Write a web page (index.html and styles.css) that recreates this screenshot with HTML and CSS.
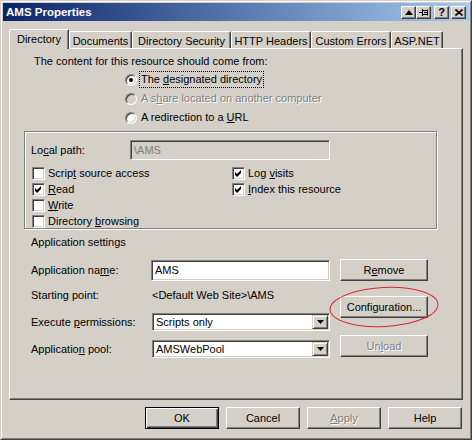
FILE: index.html
```html
<!DOCTYPE html>
<html>
<head>
<meta charset="utf-8">
<title>AMS Properties</title>
<link rel="stylesheet" href="styles.css">
</head>
<body>
<div class="window">
  <div class="frame">
    <div class="titlebar">
      <span class="title">AMS Properties</span>
      <div class="caption-btns">
        <span class="cbtn"><svg width="8" height="5" viewBox="0 0 8 5"><polygon points="0,5 8,5 4,0" fill="#000"/></svg></span>
        <span class="cbtn"><svg width="10" height="9" viewBox="0 0 10 9" fill="none" stroke="#000" stroke-width="1"><path d="M0 4.5H3.5M3.5 1V8M4 2.5H8.5V6.5H4M8.5 1.5V7.5M5 4.5H8"/></svg></span>
        <span class="cbtn gap3 qmark">?</span>
        <span class="cbtn gap2"><svg width="8" height="7" viewBox="0 0 8 7" stroke="#000" stroke-width="1.6"><path d="M0.5 0.5L7.5 6.5M7.5 0.5L0.5 6.5"/></svg></span>
      </div>
    </div>
    <div class="body">
      <div class="tabs">
        <div class="tab selected w-dir">Directory</div>
        <div class="tab w-doc">Documents</div>
        <div class="tab w-sec">Directory Security</div>
        <div class="tab w-http">HTTP Headers</div>
        <div class="tab w-err">Custom Errors</div>
        <div class="tab w-asp">ASP.NET</div>
      </div>
      <div class="panel">
        <div class="intro">The content for this resource should come from:</div>
        <div class="radios">
          <div class="rrow"><span class="radio"><span class="dot"></span></span><span class="rlabel focus">The <u>d</u>esignated directory</span></div>
          <div class="rrow disabled"><span class="radio off"></span><span class="rlabel">A s<u>h</u>are located on another computer</span></div>
          <div class="rrow"><span class="radio"></span><span class="rlabel">A redirection to a <u>U</u>RL</span></div>
        </div>
        <div class="group">
          <div class="pathrow">
            <span class="plabel">Lo<u>c</u>al path:</span>
            <span class="field off path">\AMS</span>
          </div>
          <div class="checks">
            <div class="crow"><span class="cb"></span><span>Scrip<u>t</u> source access</span></div>
            <div class="crow"><span class="cb"><svg width="7" height="7" viewBox="0 0 7 7"><path d="M0 2L2 4L6 0V3L2 7L0 5Z" fill="#000"/></svg></span><span>Log <u>v</u>isits</span></div>
            <div class="crow"><span class="cb"><svg width="7" height="7" viewBox="0 0 7 7"><path d="M0 2L2 4L6 0V3L2 7L0 5Z" fill="#000"/></svg></span><span><u>R</u>ead</span></div>
            <div class="crow"><span class="cb"><svg width="7" height="7" viewBox="0 0 7 7"><path d="M0 2L2 4L6 0V3L2 7L0 5Z" fill="#000"/></svg></span><span><u>I</u>ndex this resource</span></div>
            <div class="crow"><span class="cb"></span><span><u>W</u>rite</span></div>
            <div class="crow"></div>
            <div class="crow"><span class="cb"></span><span>Directory <u>b</u>rowsing</span></div>
          </div>
        </div>
        <div class="appset">Application settings</div>
        <div class="app">
          <div class="appgrid">
            <span class="alabel mid">Application na<u>m</u>e:</span>
            <span class="field name">AMS</span>
            <span class="alabel top">Starting point:</span>
            <span class="aval top">&lt;Default Web Site&gt;\AMS</span>
            <span class="alabel sel">Execute <u>p</u>ermissions:</span>
            <div class="select"><span class="sval">Scripts only</span><span class="sbtn"><svg width="7" height="4" viewBox="0 0 7 4"><polygon points="0,0 7,0 3.5,4" fill="#000"/></svg></span></div>
            <span class="alabel sel">Applicatio<u>n</u> pool:</span>
            <div class="select"><span class="sval">AMSWebPool</span><span class="sbtn"><svg width="7" height="4" viewBox="0 0 7 4"><polygon points="0,0 7,0 3.5,4" fill="#000"/></svg></span></div>
          </div>
          <div class="appbtns">
            <div class="btn">R<u>e</u>move</div>
            <div class="btn cfg">Confi<u>g</u>uration...</div>
            <div class="btn off unload">Un<u>l</u>oad</div>
          </div>
        </div>
      </div>
      <div class="footer">
        <div class="btn dlg default">OK</div>
        <div class="btn dlg">Cancel</div>
        <div class="btn dlg off"><u>A</u>pply</div>
        <div class="btn dlg">Help</div>
      </div>
    </div>
  </div>
  <svg class="annot" width="120" height="50" viewBox="0 0 120 50"><ellipse cx="59" cy="24" rx="54" ry="19.5" transform="rotate(-3 59 24)" fill="none" stroke="#d22a2a" stroke-width="1"/></svg>
</div>
</body>
</html>
```
FILE: styles.css
```css
* { box-sizing: border-box; }

body {
  margin: 0;
  background: #D4D0C8;
  font-family: "Liberation Sans", Arial, sans-serif;
  font-size: 11px;
  color: #000;
}

u { text-decoration: underline; text-underline-offset: 1px; }

.window {
  position: relative;
  width: 472px;
  height: 440px;
  background: #D4D0C8;
  border: 1px solid;
  border-color: #D4D0C8 #404040 #404040 #D4D0C8;
}

.frame {
  height: 100%;
  border: 1px solid;
  border-color: #fff #808080 #808080 #fff;
  padding: 1px;
  display: flex;
  flex-direction: column;
}

.titlebar {
  flex: none;
  height: 18px;
  background: linear-gradient(to right, #0A246A, #A6CAF0);
  display: flex;
  align-items: center;
  justify-content: space-between;
  padding-left: 3px;
}

.title {
  color: #fff;
  font-weight: bold;
  font-size: 11.5px;
}

.caption-btns {
  display: flex;
  margin-right: 3px;
}

.cbtn {
  width: 15px;
  height: 13px;
  background: #D4D0C8;
  border: 1px solid;
  border-color: #fff #404040 #404040 #fff;
  box-shadow: inset -1px -1px #808080;
  display: flex;
  align-items: center;
  justify-content: center;
}

.cbtn.gap3 { margin-left: 3px; }
.cbtn.gap2 { margin-left: 2px; }

.qmark {
  font-weight: bold;
  font-size: 11px;
  line-height: 11px;
}

.body {
  flex: 1;
  padding: 8px 6px 0 6px;
  display: flex;
  flex-direction: column;
}

.tabs {
  display: flex;
  align-items: flex-end;
  height: 19px;
  position: relative;
  z-index: 1;
}

.tab {
  height: 17px;
  border: 1px solid;
  border-bottom: none;
  border-color: #fff #404040 transparent #fff;
  box-shadow: inset -1px 0 #808080;
  border-radius: 2px 2px 0 0;
  padding-top: 3px;
  line-height: 13px;
  text-align: center;
  white-space: nowrap;
  background: #D4D0C8;
}

.tab.selected {
  height: 20px;
  margin-bottom: -1px;
}

.w-dir { width: 60px; }
.w-doc { width: 63px; }
.w-sec { width: 99px; }
.w-http { width: 80px; }
.w-err { width: 80px; }
.w-asp { width: 52px; }

.panel {
  flex: none;
  height: 352px;
  border: 1px solid;
  border-color: #fff #404040 #404040 #fff;
  box-shadow: inset -1px -1px #808080;
}

.intro {
  margin: 6px 0 0 24px;
  line-height: 13px;
}

.radios {
  margin: 2px 0 0 115px;
}

.rrow {
  height: 19px;
  display: flex;
  align-items: center;
}

.radio {
  flex: none;
  width: 12px;
  height: 12px;
  border-radius: 50%;
  background: #fff;
  border: 1px solid;
  border-color: #808080 #fff #fff #808080;
  box-shadow: inset 1px 1px #404040, inset -1px -1px #D4D0C8;
  margin-right: 2px;
  display: flex;
  align-items: center;
  justify-content: center;
}

.radio.off { background: #D4D0C8; }

.dot {
  width: 4px;
  height: 4px;
  border-radius: 50%;
  background: #000;
}

.rlabel {
  border: 1px dotted transparent;
  padding: 1px 1px 1px 1px;
  line-height: 13px;
}

.rlabel.focus { border-color: #000; }

.disabled .rlabel,
.off {
  color: #808080;
  text-shadow: 1px 1px 0 #fff;
}

.group {
  margin: 4px 0 0 14px;
  width: 413px;
  height: 98px;
  border: 1px solid #808080;
  box-shadow: inset 1px 1px #fff, 1px 1px #fff;
  overflow: hidden;
}

.pathrow {
  display: flex;
  align-items: center;
  height: 20px;
  margin-top: 8px;
  padding-left: 6px;
}

.plabel { width: 99px; }

.field {
  display: block;
  height: 20px;
  border: 1px solid;
  border-color: #808080 #fff #fff #808080;
  box-shadow: inset 1px 1px #404040, inset -1px -1px #D4D0C8;
  background: #fff;
  padding: 0 3px;
  line-height: 18px;
}

.field.off { background: #D4D0C8; text-shadow: none; }
.field.path { width: 200px; }

.checks {
  display: grid;
  grid-template-columns: 200px 1fr;
  grid-auto-rows: 16px;
  margin-top: 7px;
  padding-left: 7px;
}

.crow {
  display: flex;
  align-items: flex-start;
  line-height: 12px;
}

.cb {
  flex: none;
  width: 13px;
  height: 13px;
  margin-right: 3px;
  background: #fff;
  border: 1px solid;
  border-color: #808080 #fff #fff #808080;
  box-shadow: inset 1px 1px #404040, inset -1px -1px #D4D0C8;
  display: flex;
  align-items: center;
  justify-content: center;
}

.appset {
  margin: 7px 0 0 21px;
  line-height: 13px;
}

.app {
  display: flex;
  margin: 10px 0 0 21px;
}

.appgrid {
  display: grid;
  grid-template-columns: 120px 179px;
  grid-template-rows: 22px 32px 27px 19px;
}

.alabel.mid { align-self: center; line-height: 13px; padding-top: 1px; }
.alabel.top, .aval.top { padding-top: 8px; line-height: 13px; }
.aval { padding-left: 1px; }
.alabel.sel { line-height: 18px; }

.field.name {
  align-self: end;
  height: 21px;
  line-height: 19px;
}

.select {
  width: 178px;
  height: 18px;
  margin-left: 1px;
  border: 1px solid;
  border-color: #808080 #fff #fff #808080;
  box-shadow: inset 1px 1px #404040, inset -1px -1px #D4D0C8;
  background: #fff;
  display: flex;
  padding: 1px;
}

.sval {
  flex: 1;
  padding-left: 2px;
  line-height: 14px;
}

.sbtn {
  width: 16px;
  background: #D4D0C8;
  border: 1px solid;
  border-color: #D4D0C8 #404040 #404040 #D4D0C8;
  box-shadow: inset 1px 1px #fff, inset -1px -1px #808080;
  display: flex;
  align-items: center;
  justify-content: center;
}

.appbtns {
  margin-left: 10px;
  display: flex;
  flex-direction: column;
}

.btn {
  width: 88px;
  height: 22px;
  background: #D4D0C8;
  border: 1px solid;
  border-color: #fff #404040 #404040 #fff;
  box-shadow: inset -1px -1px #808080;
  display: flex;
  align-items: center;
  justify-content: center;
  line-height: 13px;
  white-space: nowrap;
}

.btn.cfg { margin-top: 15px; }
.btn.unload { margin-top: 17px; }

.footer {
  display: flex;
  justify-content: flex-end;
  gap: 7px;
  margin-top: 7px;
  padding-right: 1px;
}

.btn.dlg { width: 74px; }

.btn.default {
  border-color: #000;
  box-shadow: inset 1px 1px #fff, inset -1px -1px #404040, inset -2px -2px #808080;
}

.annot {
  position: absolute;
  left: 324px;
  top: 282px;
}
```
